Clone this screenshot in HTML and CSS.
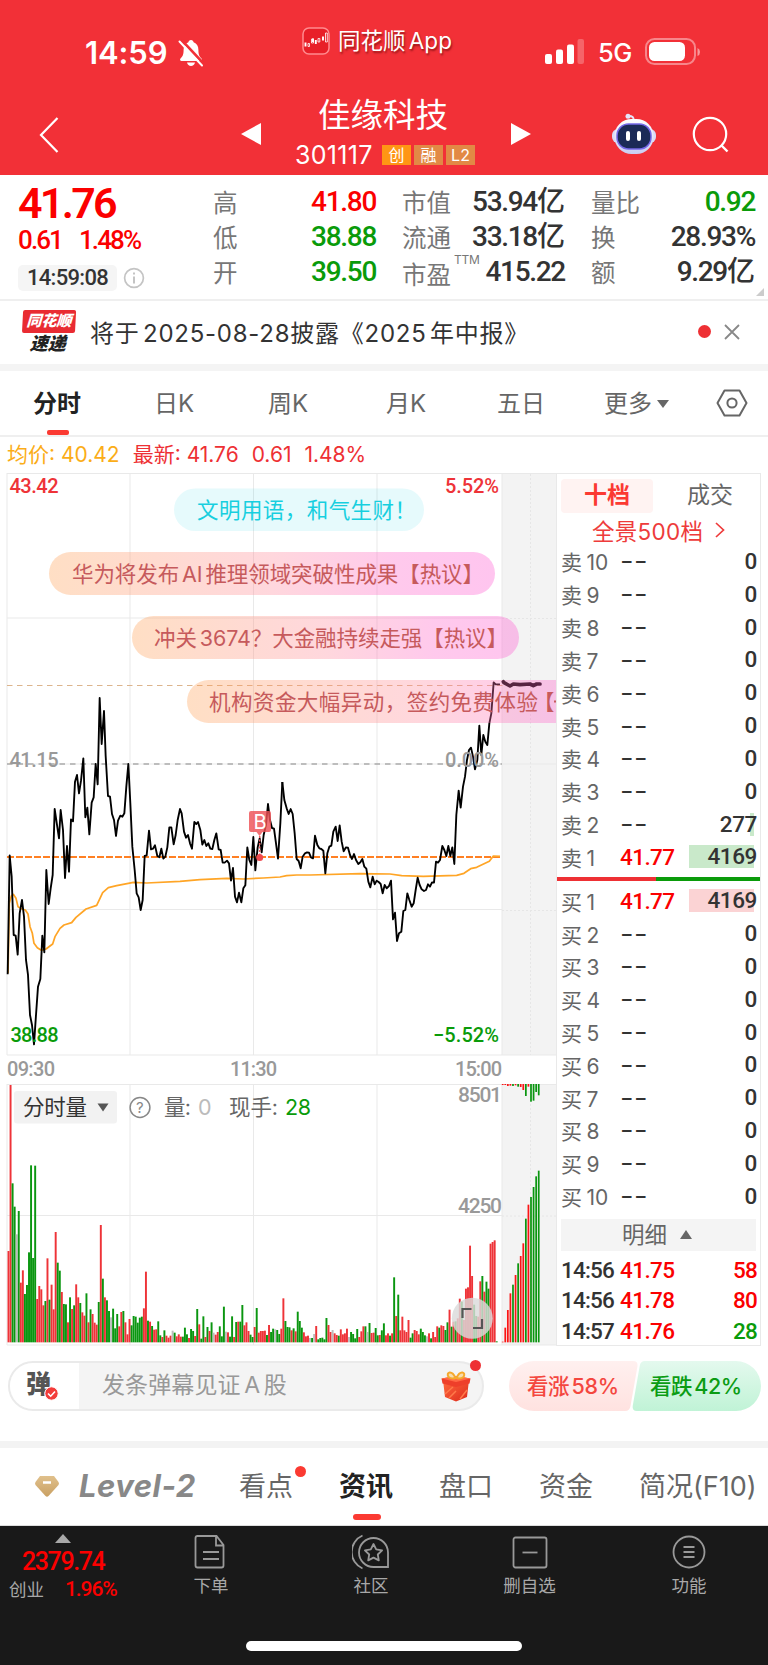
FILE: index.html
```html
<!DOCTYPE html>
<html lang="zh-CN">
<head>
<meta charset="utf-8">
<title>佳缘科技 301117</title>
<link rel="stylesheet" href="styles.css">
</head>
<body>
<header class="top">
  <div class="status">
    <span class="clock">14:59</span>
    <svg class="bell" width="26" height="28" viewBox="0 0 26 28"><path d="M13 1c1.500 0 2.500 1 2.600 2.300 3.400 1.200 4.800 4 4.800 7.700 0 5 1.200 6.500 3.100 8.600.9 1 .4 2.400-1 2.400h-19c-1.400 0-1.900-1.400-1-2.400 1.900-2.100 3.100-3.600 3.100-8.600 0-3.700 1.400-6.500 4.800-7.700C10.500 2 11.500 1 13 1z" fill="#fff"/><path d="M9 23.500h8c-.5 2.200-2 3.500-4 3.500s-3.500-1.300-4-3.500z" fill="#fff"/><path d="M3.500 1L26 25" stroke="#f23037" stroke-width="2.600"/><path d="M1.500 2.500L24 26.500" stroke="#fff" stroke-width="2" stroke-linecap="round"/></svg>
    <span class="app">
      <svg width="28" height="28" viewBox="0 0 28 28"><rect x="1" y="1" width="26" height="26" rx="6" fill="#e81f28" stroke="#ff8b8f" stroke-width="1.500"/><path d="M3.500 15.500v4M11 11.500v3.500M13.800 13v4M21 9.500v4" stroke="#fff" stroke-width="1.900"/><path d="M6 16.500h1.500v3H6zM9.500 12h2v4h-2zM16 11.500h1.800v3.500H16zM23.500 6h1.800v9h-1.800z" fill="none" stroke="#fff" stroke-width=".8"/></svg>
      <b>同花顺 App</b>
    </span>
    <svg class="signal" width="40" height="26" viewBox="0 0 40 26"><g fill="#fff"><rect x="0" y="15" width="7" height="10" rx="2"/><rect x="11" y="10.500" width="7" height="14.500" rx="2"/><rect x="22" y="5.500" width="7" height="19.500" rx="2"/><rect x="32.500" y="0" width="6.500" height="25" rx="2" opacity=".25"/></g></svg>
    <span class="net">5G</span>
    <svg class="battery" width="56" height="28" viewBox="0 0 56 28"><rect x="1" y="1" width="49" height="25" rx="8.500" fill="none" stroke="#fff" stroke-opacity=".42" stroke-width="2"/><rect x="4" y="4" width="36" height="19" rx="5.500" fill="#fff"/><path d="M52.500 10v8q2.500-1 2.500-4t-2.500-4z" fill="#fff" opacity=".5"/></svg>
  </div>
  <div class="nav">
    <svg class="back" width="20" height="38" viewBox="0 0 20 38"><path d="M18.500 2L2 19l16.500 17" fill="none" stroke="#fff" stroke-width="2.200"/></svg>
    <svg class="prev" width="20" height="22" viewBox="0 0 20 22"><path d="M20 0v22L0 11z" fill="#fff"/></svg>
    <div class="title">
      <h1>佳缘科技</h1>
      <p><span class="code">301117</span><i class="tag hot">创</i><i class="tag">融</i><i class="tag">L2</i></p>
    </div>
    <svg class="next" width="20" height="22" viewBox="0 0 20 22"><path d="M0 0v22l20-11z" fill="#fff"/></svg>
    <svg class="robot" width="44" height="42" viewBox="0 0 44 42"><defs><linearGradient id="rb" x2="0" y2="1"><stop stop-color="#fff"/><stop offset="1" stop-color="#c9cdf2"/></linearGradient></defs><circle cx="16" cy="3.200" r="2.500" fill="#e4e6fb"/><path d="M17 3q5 0 4.500 4" fill="none" stroke="#e4e6fb" stroke-width="2"/><rect x="0" y="16" width="44" height="14" rx="6" fill="#d9dbf6"/><rect x="2.500" y="6" width="39" height="35" rx="17" fill="url(#rb)"/><rect x="5" y="11" width="34" height="25" rx="11.500" fill="#1b2a57" stroke="#7568e8" stroke-width="1.500"/><rect x="14" y="18" width="4" height="10" rx="2" fill="#fff"/><rect x="25" y="18" width="4" height="10" rx="2" fill="#fff"/></svg>
    <svg class="search" width="38" height="38" viewBox="0 0 38 38"><circle cx="18" cy="18" r="16.200" fill="none" stroke="#fff" stroke-width="2.200"/><path d="M29 29l6.500 6.500" stroke="#fff" stroke-width="2.400"/></svg>
  </div>
</header>

<section class="quote">
  <div class="last">
    <strong>41.76</strong>
    <div class="chg"><span>0.61</span><span>1.48%</span></div>
    <div class="time"><span>14:59:08</span><svg width="22" height="22" viewBox="0 0 22 22" fill="none" stroke="#c4c4c4" stroke-width="1.700"><circle cx="11" cy="11" r="9.400"/><path d="M11 9.500v7M11 5.500v2" stroke-width="2"/></svg></div>
  </div>
  <dl class="c1"><dt>高</dt><dd class="r">41.80</dd><dt>低</dt><dd class="g">38.88</dd><dt>开</dt><dd class="g">39.50</dd></dl>
  <dl class="c2"><dt>市值</dt><dd>53.94<em>亿</em></dd><dt>流通</dt><dd>33.18<em>亿</em></dd><dt class="low">市盈<sup>TTM</sup></dt><dd>415.22</dd></dl>
  <dl class="c3"><dt>量比</dt><dd class="g">0.92</dd><dt>换</dt><dd>28.93%</dd><dt>额</dt><dd>9.29<em>亿</em></dd></dl>
  <i class="corner"></i>
</section>

<section class="news">
  <div class="express"><b>同花顺</b><b>速递</b></div>
  <p>将于 2025-08-28披露《2025 年中报》</p>
  <i class="dot"></i>
  <svg width="16" height="16" viewBox="0 0 16 16"><path d="M1 1l14 14M15 1L1 15" stroke="#888" stroke-width="1.800"/></svg>
</section>

<nav class="periods">
  <a class="on">分时</a><a>日K</a><a>周K</a><a>月K</a><a>五日</a><a class="more">更多<i></i></a>
  <svg width="32" height="28" viewBox="0 0 32 28" fill="none" stroke="#666" stroke-width="2"><path d="M8.500 1.500h15L30.500 14l-7 12.500h-15L1.500 14z" stroke-linejoin="round"/><circle cx="16" cy="14" r="4.600"/></svg>
</nav>

<div class="legend"><span class="avg">均价: 40.42</span><span>最新: 41.76</span><span>0.61</span><span>1.48%</span></div>

<main class="board">
  <svg class="chart" width="557" height="873" viewBox="0 473 557 873">
    <defs>
      <linearGradient id="pill"><stop stop-color="#ffa053"/><stop offset=".5" stop-color="#ff8a9b"/><stop offset=".78" stop-color="#ff61c8"/><stop offset="1" stop-color="#ff55d0"/></linearGradient>
      <clipPath id="edge"><rect x="0" y="473" width="556" height="873"/></clipPath>
    </defs>
    <path d="M502 474h54v581h-54zM502 1084h54v261h-54z" fill="#f3f3f3"/>
    <path d="M7 473.500h550M7 618h495M7 764h549M7 909.500h495M7 1055h550M7 1084.500h550M7 1215.500h495M7 1345h550M7 473v582M130 473v582M253.500 473v582M377 473v582M502 473v582M556.500 473v873M7 1084v261M130 1084v261M253.500 1084v261M377 1084v261M502 1084v261" fill="none" stroke="#e9e9e9"/>
    <path d="M530.500 474v581M530.500 1084v261M502 618.500h54M502 910.500h54M502 1216h54" stroke="#e6e6e6" stroke-dasharray="2 2"/>
    <path d="M7 685.500h497" stroke="#dcb48c" stroke-dasharray="5.500 4.500"/>
    <path d="M7 764h495" stroke="#aaa" stroke-width="1.400" stroke-dasharray="5.500 5"/>
    <g class="num" font-size="20">
      <text x="9.500" y="493" textLength="49" fill="#ee3338">43.42</text>
      <text x="445" y="493" textLength="54" fill="#ee3338">5.52%</text>
      <text x="9.500" y="767" textLength="49" fill="#999">41.15</text>
    </g>
    <path d="M7 857h495" stroke="#ff8023" stroke-width="1.800" stroke-dasharray="7 2"/>
    <g fill="none" stroke-linejoin="round">
      <g stroke="#ffa526" stroke-width="5.200">
        <path transform="translate(0 760) scale(.33333)" d="M24 640L28 430 34 408 40 403 48 415 54 440 66 447 76 450 84 462 90 500 97 520 102 550 112 563 124 571 138 567 158 552 165 530 180 505 192 495 215 488 228 472 258 447 290 436 300 415 308 398 325 383 350 377 385 370 400 367 440 369 540 364 600 359 680 355 730 357 790 354 840 351 860 347 890 345 930 345 1080 341 1170 342 1205 347 1270 349 1370 346 1392 340 1412 326 1430 322 1468 304 1480 288 1500 289"/>
      </g>
      <g stroke="#000" stroke-width="5.600">
        <path transform="translate(0 760) scale(.33333)" d="M23 643L29 286 35 350 41 525 47 527 53 584 59 460 66 420 72 470 78 600 84 645 90 765 96 795 102 853 108 765 114 680 121 657 127 527 133 577 139 330 146 432 152 385 158 345 164 147 170 188 177 235 182 150 189 210 195 354 201 258 207 335 213 178 219 184 225 65 231 45 237 100 243 62 250 -5 256 172 262 143 268 223 275 128 281 112 287 12 293 73 299 -186 305 -48 312 -147 317 -12 324 108 330 110 336 162 342 180 348 228 354 182 361 167 367 170 373 160 379 80 385 12 391 130 397 260 404 330 410 400 416 412 422 450 428 420 434 288 440 286 447 212 453 268 459 266 465 256 472 288 478 292 484 266 490 296 496 290 502 262 508 202 514 202 521 253 527 225 533 180 540 147 545 160 552 215 558 233 564 225 570 250 576 266 583 186 589 192 594 186 601 210 607 254 613 240 619 258 625 250 631 266 637 267 643 240 649 220 656 268 662 270 668 308 674 308 681 302 687 310 693 362 699 324 705 410 711 427 717 398 724 427 730 385 736 376 742 262 748 300 754 315 760 231 766 331 773 262 779 235 785 277 791 225 798 195 804 132 810 180 816 204 822 206 828 250 834 296 841 190 847 66"/>
        <path transform="translate(280 660) scale(.33333)" d="M7 366L13 420 20 445 26 462 32 447 38 462 44 520 50 597 56 603 62 625 68 590 75 580 81 577 87 578 93 592 99 595 105 527 112 555 118 565 124 567 130 572 136 640 142 580 148 560 154 557 160 515 167 500 173 543 179 496 185 545 191 574 198 562 204 563 210 585 216 597 222 582 228 600 235 612 241 607 247 597 253 620 259 626 265 665 271 682 278 650 284 673 290 662 296 666 302 672 308 700 314 675 320 685 327 678 333 662 339 778 345 758 351 843 357 820 364 815 370 753 376 750 382 700 388 720 395 740 401 730 407 690 413 653 419 675 425 688 432 693 438 690 444 673 450 680 456 667 462 668 468 605 474 608 480 600 487 558 493 570 499 588 505 558 511 588 517 562 523 612 529 465 536 392 542 443 549 380 555 350 561 300 567 270 573 263 579 290 585 328 592 300 598 197 604 285 610 225 616 245 622 255 628 190 634 160 641 67 647 73 660 73"/>
        <path transform="translate(280 660) scale(.33333)" stroke-width="11" stroke-linecap="round" d="M670 65L672 68 690 78 700 72 720 74 750 72 760 77 770 72 780 72"/>
      </g>
    </g>
    <g class="num" font-size="20">
      <text x="445" y="767" textLength="54" fill="#999">0.00%</text>
      <text x="10.500" y="1042" textLength="48" fill="#0a9b0a">38.88</text>
      <text x="433" y="1042" textLength="66" fill="#0a9b0a">−5.52%</text>
      <g fill="#999">
        <text x="7" y="1076" textLength="48">09:30</text><text x="230" y="1076" textLength="47">11:30</text><text x="455" y="1076" textLength="47">15:00</text>
      </g>
    </g>
    <path d="M259.700 836v22" stroke="#ef5a5f" stroke-width="1.500" stroke-dasharray="2 1.500"/>
    <path d="M251 811h18q2 0 2 2v17q0 2-2 2h-6.500l-3 4-3-4H251q-2 0-2-2v-17q0-2 2-2z" fill="#ee5156" opacity=".82"/>
    <circle cx="259.700" cy="857.500" r="3.500" fill="#ee4b50"/>
    <text class="sans" x="253.500" y="829" font-size="20" fill="#fff">B</text>

    <g clip-path="url(#edge)">
      <rect x="174" y="488.500" width="250" height="42.500" rx="21.200" fill="#1fd0e8" fill-opacity=".11"/>
      <g fill="url(#pill)" fill-opacity=".34">
        <rect x="49" y="552" width="446" height="43" rx="21.500"/>
        <rect x="132" y="616" width="387" height="43" rx="21.500"/>
        <rect x="187" y="680" width="460" height="43" rx="21.500"/>
      </g>
      <g class="cjk" font-size="21.500" fill="#c65a5c">
        <text x="197" y="518" textLength="219" fill="#17cfdf">文明用语，和气生财！</text>
        <text class="tight" x="72" y="582" textLength="412">华为将发布 AI 推理领域突破性成果【热议】</text>
        <text class="tight" x="154" y="646" textLength="354">冲关 3674？大金融持续走强【热议】</text>
        <text x="209" y="710" textLength="329">机构资金大幅异动，签约免费体验</text>
        <text x="533" y="710">【</text>
      </g>
      <path d="M554 701.500h3" stroke="#c65a5c" stroke-width="1.800"/>
    </g>

    <g id="volume" transform="translate(0 1070) scale(.33333)"></g>
    <rect x="14" y="1091" width="103" height="32.500" rx="3" fill="#f2f2f2"/>
    <g class="cjk" font-size="21.500" fill="#666">
      <text x="23" y="1115" textLength="64" fill="#333">分时量</text>
      <text x="164" y="1115" textLength="27">量:</text>
      <text x="198" y="1115" fill="#bbb" class="sans">0</text>
      <text x="229" y="1115" textLength="49">现手:</text>
      <text class="sans" x="285" y="1115" textLength="26" fill="#0a9b0a">28</text>
    </g>
    <path d="M97.500 1103.500h11l-5.500 8z" fill="#555"/>
    <circle cx="140" cy="1107.500" r="9.900" fill="#fff" stroke="#888" stroke-width="1.500"/>
    <text class="sans" x="136" y="1113" font-size="15" fill="#888">?</text>
    <g class="num" font-size="21" fill="#999">
      <text x="458" y="1102" textLength="44">8501</text>
      <text x="458" y="1213" textLength="44">4250</text>
    </g>
    <circle cx="472.300" cy="1318.300" r="20.500" fill="#dadada" fill-opacity=".82"/>
    <path d="M462.500 1318v-9h9M473 1328h9v-9" fill="none" stroke="#555" stroke-width="2.200"/>
  </svg>

  <aside class="book">
    <div class="switch"><b>十档</b><span>成交</span></div>
    <div class="full">全景500档<svg width="10" height="18" viewBox="0 0 10 18"><path d="M1 2l7.500 7L1 16" fill="none" stroke="#ee3b3b" stroke-width="1.700"/></svg></div>
    <ul class="depth">
      <li><span>卖 10</span><b>--</b><em>0</em></li>
      <li><span>卖 9</span><b>--</b><em>0</em></li>
      <li><span>卖 8</span><b>--</b><em>0</em></li>
      <li><span>卖 7</span><b>--</b><em>0</em></li>
      <li><span>卖 6</span><b>--</b><em>0</em></li>
      <li><span>卖 5</span><b>--</b><em>0</em></li>
      <li><span>卖 4</span><b>--</b><em>0</em></li>
      <li><span>卖 3</span><b>--</b><em>0</em></li>
      <li><span>卖 2</span><b>--</b><em class="few">277</em></li>
      <li><span>卖 1</span><b class="px">41.77</b><em class="ask">4169</em></li>
    </ul>
    <div class="ratio"></div>
    <ul class="depth">
      <li><span>买 1</span><b class="px">41.77</b><em class="bid">4169</em></li>
      <li><span>买 2</span><b>--</b><em>0</em></li>
      <li><span>买 3</span><b>--</b><em>0</em></li>
      <li><span>买 4</span><b>--</b><em>0</em></li>
      <li><span>买 5</span><b>--</b><em>0</em></li>
      <li><span>买 6</span><b>--</b><em>0</em></li>
      <li><span>买 7</span><b>--</b><em>0</em></li>
      <li><span>买 8</span><b>--</b><em>0</em></li>
      <li><span>买 9</span><b>--</b><em>0</em></li>
      <li><span>买 10</span><b>--</b><em>0</em></li>
    </ul>
    <div class="detail">明细<i></i></div>
    <ul class="ticks">
      <li><span>14:56</span><b>41.75</b><em class="r">58</em></li>
      <li><span>14:56</span><b>41.78</b><em class="r">80</em></li>
      <li><span>14:57</span><b>41.76</b><em class="g">28</em></li>
    </ul>
  </aside>
</main>

<section class="talk">
  <div class="input">
    <div class="dan">弹<svg width="15" height="15" viewBox="0 0 15 15"><circle cx="7.500" cy="7.500" r="6.700" fill="#f33c3a" stroke="#fff"/><path d="M4 7.500l2.700 2.700L11 5.500" fill="none" stroke="#fff" stroke-width="1.600"/></svg></div>
    <span>发条弹幕见证 A 股</span>
    <svg class="gift" width="32" height="32" viewBox="0 0 32 32"><defs><linearGradient id="gf" x2="1" y2="1"><stop stop-color="#ff6a3d"/><stop offset="1" stop-color="#dd2a1c"/></linearGradient></defs><path d="M3 10l13 4 13-4-2 17-11 4.500L5 27z" fill="url(#gf)"/><path d="M1.500 8.500L16 6l14.500 2.500-1 5L16 17 2.500 13.500z" fill="#ee3f2a"/><path d="M1.500 8.500L16 6l14.500 2.500L16 12z" fill="#ff6a45"/><path d="M5 24l8-7M9 28l7-7M20 29l7-9" stroke="#ff7a4a" stroke-width="1.500"/><path d="M15.500 8C12-.5 5.500 2 8.500 7q3 2.500 7 1zM16.500 8C20-.5 26.500 2 23.500 7q-3 2.500-7 1z" fill="#f6dcae" stroke="#f5a92c" stroke-width="2"/></svg>
    <i class="dot"></i>
  </div>
  <div class="vote">
    <svg width="254" height="50" viewBox="0 0 254 50"><defs><linearGradient id="up" x2="0" y2="1"><stop stop-color="#fff0ef"/><stop offset="1" stop-color="#ffe2e0"/></linearGradient><linearGradient id="dn" x2="0" y2="1"><stop stop-color="#e4f9ee"/><stop offset="1" stop-color="#c0f3d6"/></linearGradient></defs><path d="M25 0h99q5 0 4.500 5l-7 40q-.8 5-5.500 5H25a25 25 0 0 1 0-50z" fill="url(#up)"/><path d="M136 0h91a25 25 0 0 1 0 50H128q-5 0-4.300-5l7-40q.8-5 5.300-5z" fill="url(#dn)"/><g class="cjk tight" font-weight="500" font-size="21.500"><text x="18" y="32.500" textLength="92" fill="#f4473f">看涨 58%</text><text x="141" y="32.500" textLength="92" fill="#0b9c14">看跌 42%</text></g></svg>
  </div>
</section>

<nav class="sections">
  <svg class="gem" width="26" height="24" viewBox="0 0 26 24"><defs><linearGradient id="gm" x2="0" y2="1"><stop stop-color="#e0c08c"/><stop offset="1" stop-color="#c9a062"/></linearGradient></defs><path d="M6 1h14l4.500 6q1 1.500 0 3L14.500 21q-1.500 1.500-3 0L1.500 10q-1-1.500 0-3z" fill="url(#gm)"/><path d="M9 7.500h8" stroke="#fff" stroke-width="2.500"/></svg>
  <a class="level">Level-2</a><a class="new">看点</a><a class="on">资讯</a><a>盘口</a><a>资金</a><a>简况(F10)</a>
</nav>

<footer class="bar">
  <div class="tabs">
    <div class="index"><i></i><strong>2379.74</strong><p>创业<b>1.96%</b></p></div>
    <a><svg width="36" height="36" viewBox="0 0 36 36"><path d="M4.500 2h19l7 9v20.500q0 2-2 2h-24q-2 0-2-2V4q0-2 2-2zM23 2v9.500h7.500M10 18h16M10 25h16"/></svg>下单</a>
    <a><svg width="38" height="36" viewBox="0 0 38 36"><path d="M36 33V18.500A14.500 14.500 0 1 0 21.500 33zM10.500 1.500a18 18 0 0 0 0 33"/><path d="M21.500 10l2.700 5.400 5.900.9-4.300 4.200 1 5.900-5.300-2.800-5.300 2.800 1-5.900-4.300-4.200 5.900-.9z" stroke-linejoin="round"/></svg>社区</a>
    <a><svg width="36" height="36" viewBox="0 0 36 36"><rect x="1.500" y="3.500" width="33" height="30" rx="2"/><path d="M10.500 18.500h15"/></svg>删自选</a>
    <a><svg width="36" height="36" viewBox="0 0 36 36"><circle cx="18" cy="18" r="15.500"/><path d="M12.500 13h11M12.500 18h11M12.500 23h11"/></svg>功能</a>
  </div>
  <div class="home"></div>
</footer>
<script src="chart.js"></script>
</body>
</html>
```

FILE: styles.css
```css
* { box-sizing: border-box; margin: 0; padding: 0; }
body { width: 768px; height: 1665px; background: #fff; color: #333; overflow: hidden; white-space: nowrap;
  font-family: Inter, "Noto Sans CJK SC", sans-serif; }
svg { display: block; flex: none; }
i, em { font-style: normal; }
ul { list-style: none; }
.num { font-family: Roboto, sans-serif; font-weight: 500; }
.cjk { font-family: Inter, "Noto Sans CJK SC", sans-serif; }
.sans { font-family: Inter, sans-serif; }
.tight { word-spacing: -3px; }
text { white-space: pre; }
.r { color: #fb0000; }
.g { color: #0a9b0a; }

.top { height: 175px; background: #f23037; color: #fff; }
.status { height: 90px; display: flex; align-items: flex-start; padding: 0 0 0 85px; }
.clock { width: 93px; margin-top: 34px; font-size: 31px; line-height: 38px; font-weight: 600; letter-spacing: -.1px; }
.bell { margin-top: 39px; }
.app { display: flex; width: 243px; margin: 27px 0 0 98px; }
.app b { margin-left: 8px; font-size: 22.500px; line-height: 27px; font-weight: 400; word-spacing: -3px; text-shadow: 1px 2px 2px rgba(80,0,0,.55); }
.signal { margin-top: 39px; }
.net { width: 47px; margin: 36px 0 0 13px; font-size: 25.500px; line-height: 34px; font-weight: 500; letter-spacing: -.5px; }
.battery { margin-top: 38px; }
.nav { height: 85px; display: flex; align-items: flex-start; padding-left: 39px; }
.back { margin-top: 26px; }
.prev { margin: 33px 0 0 182px; }
.title { width: 250px; }
.title h1 { font-size: 32.500px; line-height: 40px; font-weight: 400; margin: 6px 0 0 57px; }
.title p { display: flex; align-items: center; margin: 8px 0 0 34px; height: 22px; }
.code { width: 87px; font-size: 25px; letter-spacing: .3px; }
.tag { width: 29px; height: 20px; margin-right: 3px; background: #e28945; font-size: 16px; line-height: 20px; text-align: center; }
.tag.hot { background: #ff9614; }
.next { margin: 33px 0 0 0; }
.robot { margin: 23px 0 0 81px; }
.search { margin: 26px 0 0 36px; }

.quote { position: relative; height: 126px; display: grid; grid-template-columns: 170px 163px 163px 164px; column-gap: 26px; padding: 9px 0 0 18px; border-bottom: 2px solid #efefef; }
.last strong { display: block; height: 40px; font: 600 43px/38px Roboto; letter-spacing: -2.700px; color: #fb0000; }
.chg { display: flex; gap: 17px; font: 500 26px/32px Roboto; letter-spacing: -1.900px; color: #fb0000; }
.time { display: flex; align-items: center; gap: 6px; margin-top: 9px; }
.time span { width: 99px; height: 26px; border-radius: 5px; background: #f5f5f5; font: 500 22px/26px Roboto; letter-spacing: -.7px; text-align: center; }
dl { display: grid; grid-template-columns: auto 1fr; grid-auto-rows: 35px; align-items: center; margin: 0 1px 0 -1px; }
dt { font-size: 24.500px; color: #777; }
dd { font: 500 28px/35px Roboto, "Noto Sans CJK SC"; letter-spacing: -1.300px; text-align: right; color: #333; }
dd em { font: 500 28px/20px "Noto Sans CJK SC"; letter-spacing: 0; }
dd.r { color: #fb0000; }
dd.g { color: #0a9b0a; }
dt.low { position: relative; top: 2px; }
dt sup { position: absolute; left: 52px; top: -3px; font-size: 12px; line-height: 14px; letter-spacing: -.3px; }
.corner { position: absolute; right: 4px; bottom: 3px; border: 4.500px solid #ccc; border-top-color: transparent; border-left-color: transparent; }

.news { height: 63px; display: flex; align-items: center; padding-left: 22px; }
.express { width: 53px; height: 44px; margin-top: -2px; font-style: italic; line-height: 22px; transform: skewX(-3deg); }
.express b { display: block; text-align: center; font-size: 15px; font-weight: 900; height: 23px; background: #e92b32; color: #fff; border-radius: 2px; }
.express b + b { font-size: 18px; background: none; color: #222; height: 21px; line-height: 21px; }
.news p { width: 608px; margin: -3px 0 0 15px; font-size: 24px; letter-spacing: .75px; word-spacing: -4px; }
.dot { width: 13px; height: 13px; border-radius: 50%; background: #ee3034; }
.news > .dot, .news > svg { margin-top: -2px; }
.news svg { margin-left: 13px; }

.periods { height: 73px; border-top: 7px solid #f4f4f4; border-bottom: 2px solid #efefef; display: grid; grid-template-columns: 121px 114px 118px 111px 107px 112px 32px; align-items: center; padding-left: 33px; font-size: 24px; color: #666; }
.periods a { height: 64px; line-height: 66px; }
.periods .on { position: relative; color: #222; font-weight: 700; }
.periods .on::after { content: ""; position: absolute; left: 14px; bottom: 0; width: 22px; height: 5px; border-radius: 2px; background: #fb3a32; }
.more i { display: inline-block; margin: 0 0 4px 5px; border: 6px solid transparent; border-top: 8px solid #666; border-bottom: 0; }

.legend { height: 36px; display: flex; gap: 13px; padding-left: 7px; font-size: 21px; line-height: 36px; color: #ee3034; }
.legend .avg { color: #fbad18; }

.board { display: flex; height: 873px; }
.book { width: 204px; border: 1px solid #e9e9e9; border-left: 0; padding-top: 5px; }
.switch { display: flex; margin-left: 4px; height: 34px; line-height: 33px; font-size: 23px; }
.switch b { width: 92px; border-radius: 4px; background: #fff3f2; color: #fb3a32; text-align: center; }
.switch span { margin-left: 34px; color: #666; }
.full { display: flex; align-items: center; gap: 12px; height: 34px; padding-left: 35px; margin-bottom: -2px; font-size: 22.500px; letter-spacing: .3px; color: #ee3b3b; }
.depth { padding: 0 3px 0 4px; }
.depth li { display: grid; grid-template-columns: 59px 69px 68px; align-items: center; height: 32.840px; }
.depth span { font-size: 21px; color: #666; word-spacing: -1.500px; }
.depth b { font: 400 25px/24px Inter; transform: scaleX(1.18); transform-origin: 0 50%; letter-spacing: .3px; }
.depth b.px, .ticks b { font: 500 22.500px/24px Roboto; letter-spacing: -.6px; color: #fb0000; transform: none; }
.depth em { font: 500 22.500px/23px Roboto; text-align: right; letter-spacing: -.4px; }
.ask { background: linear-gradient(#c9e9ca, #c9e9ca) 0 0 / 65px 23px no-repeat; }
.bid { background: linear-gradient(#fbd3d4, #fbd3d4) 0 0 / 65px 23px no-repeat; }
.few { background: linear-gradient(#c9e9ca, #c9e9ca) 61px 0 / 4px 23px no-repeat; }
.ratio { height: 4px; margin: 4px 0 3px; background: linear-gradient(90deg, #ee3034 98.500px, #0a9b0a 0); }
.detail { display: flex; align-items: center; height: 32.500px; margin: 6px 4px 4px 4px; padding-left: 61px; background: #f4f4f4; font-size: 22.500px; line-height: 28px; color: #666; }
.detail i { margin-left: 13px; border: 6px solid transparent; border-bottom: 9px solid #666; border-top: 0; }
.ticks { padding: 0 3px 0 4px; }
.ticks li { display: grid; grid-template-columns: 59px 69px 68px; align-items: center; height: 30.200px; font: 500 22.500px/24px Roboto; letter-spacing: -.8px; }
.ticks em { text-align: right; }

.talk { display: flex; height: 102px; padding: 15px 0 0 8px; border-bottom: 7px solid #f3f3f3; }
.input { position: relative; width: 476px; height: 50px; border: 2px solid #eaeaea; border-radius: 25px; background: #f4f4f4; display: flex; align-items: center; }
.dan { position: relative; width: 69px; height: 46px; border-radius: 23px 0 0 23px; background: #fff; padding-left: 16px; font-size: 25px; line-height: 42px; font-weight: 800; color: #555; }
.dan svg { position: absolute; left: 34px; top: 23px; }
.input span { width: 336px; padding-left: 23px; font-size: 23px; line-height: 40px; margin-top: -3px; color: #999; word-spacing: -3px; letter-spacing: .1px; }
.gift { margin-left: 25px; }
.input .dot { position: absolute; left: 460px; top: -3px; width: 11px; height: 11px; }
.vote { margin-left: 25px; }

.sections { height: 78px; display: grid; grid-template-columns: 45px 160px 100px 100px 100px 100px 130px; align-items: center; padding-left: 34px; font-size: 27px; color: #666; border-bottom: 1px solid #ddd; }
.sections a { position: relative; line-height: 78px; height: 78px; }
.sections .level { font-size: 31px; font-weight: 700; font-style: italic; color: #888; letter-spacing: .5px; line-height: 76px; }
.sections .on { font-weight: 700; color: #222; }
.sections .on::after { content: ""; position: absolute; left: 14px; top: 66px; width: 28px; height: 6px; border-radius: 3px; background: #fb3a32; }
.sections .new::after { content: ""; position: absolute; left: 56px; top: 18px; width: 11px; height: 11px; border-radius: 50%; background: #fb3a32; }

.bar { height: 140px; background: #191919; color: #a8a8a8; }
.tabs { height: 115px; display: grid; grid-template-columns: 131px 160px 160px 157px 162px; }
.tabs a { display: flex; flex-direction: column; align-items: center; padding-top: 8px; font-size: 17.500px; line-height: 30px; }
.tabs a svg { margin-bottom: 1px; fill: none; stroke: #999; stroke-width: 1.800; }
.index { padding: 8px 0 0 9px; }
.index i { display: block; width: 0; margin-left: 46px; border: 8.500px solid transparent; border-bottom: 9.500px solid #a8a8a8; border-top: 0; }
.index strong { display: block; margin: 4px 0 0 13px; font: 500 25px/29px Roboto; letter-spacing: -1.400px; color: #fb0000; }
.index p { display: flex; gap: 21px; font-size: 17.500px; line-height: 24px; margin-top: 2px; }
.index b { font: 500 21px/22px Roboto; letter-spacing: -1.100px; color: #fb0000; }
.home { width: 276px; height: 10px; margin-left: 246px; border-radius: 5px; background: #fff; }
```

FILE: chart.js
```js
// Bars are listed in minute order: colour letter (r up, g down, x flat) and top edge.
const bars = `r543 r45 g340 g410 x493 g423 r638 r601 g672 g645 g547 g286 g564 g287 r687 r648 r658 r706 g693 r565
g689 r644 r718 r486 g578 g602 r666 g702 g703 r757 g682 r717 g706 r643 r682 g699 r727 r737 g670 r757
g718 r732 r758 r764 g696 r465 g626 r682 g691 g723 x742 g716 g775 g732 r769 r726 g723 r757 r793 r747
g766 g738 g740 g758 g743 g740 r715 r605 g752 r755 g768 r779 r778 g754 g796 r801 g781 r797 r803 r797
x782 g788 r799 r793 r800 g800 g773 g793 r804 g777 g783 r798 g717 r763 g806 g739 r801 g771 r783 g757
x788 r794 r786 g769 g799 g710 x785 r787 g800 g739 r801 g756 r755 g755 g705 r766 r757 r783 g794 g801
r771 g714 r788 r783 r783 r782 g795 r765 g786 g776 x778 g780 g792 r776 r685 g753 g771 g772 r781 g775
r784 g725 g753 g773 r787 r799 r797 x804 g804 x792 r768 g808 g804 g803 g808 g744 r765 r786 x780 r790
r795 g797 r778 r793 r790 r776 x801 g786 g792 g805 g777 r801 r784 r769 g769 x786 g759 r789 r788 g774
g796 r795 g781 g760 r796 r790 g797 r790 g622 r738 g674 r781 r740 r781 r786 r750 g803 g790 r780 r783
r793 g776 g786 g796 x799 r790 g805 r786 r801 r769 g773 r766 r768 g780 g757 r719 g770 r755 g754 r745
r686 g695 r750 r656 r652 r527 r618 g704 g738 r740 r634 g618 r665 g635 g656 r521 r516 r511 g814`.split(/\s+/);

// Closing auction: colour, lower bar top, upper bar bottom.
const auction = [
  ['r', 815, 45], ['r', 773, 45], ['r', 720, 48], ['r', 670, 47], ['g', 644, 48],
  ['r', 615, 46], ['g', 580, 50], ['r', 558, 51], ['r', 520, 60], ['g', 446, 78],
  ['r', 404, 50], ['g', 381, 95], ['g', 351, 92], ['g', 319, 66], ['g', 302, 76]
];

const BASE = 817;
const fill = { r: '#ee3338', g: '#0a9610', x: '#bcbcbc' };
const group = document.getElementById('volume');

function bar(x, y, w, h, color) {
  const rect = document.createElementNS('http://www.w3.org/2000/svg', 'rect');
  rect.setAttribute('x', x);
  rect.setAttribute('y', y);
  rect.setAttribute('width', w);
  rect.setAttribute('height', h);
  rect.setAttribute('fill', color);
  group.appendChild(rect);
}

bars.forEach((b, i) => {
  const top = Number(b.slice(1));
  bar(22.6 + i * 6.154, top, 5.8, BASE - top, fill[b[0]]);
});

auction.forEach(([c, top, bottom], i) => {
  const x = 1508 + i * 7.72 - 2.5;
  const color = c === 'r' ? '#fb1515' : fill.g;
  bar(x, top, 5.2, BASE - top, color);
  bar(x, 42, 5.2, bottom - 42, color);
});
```
